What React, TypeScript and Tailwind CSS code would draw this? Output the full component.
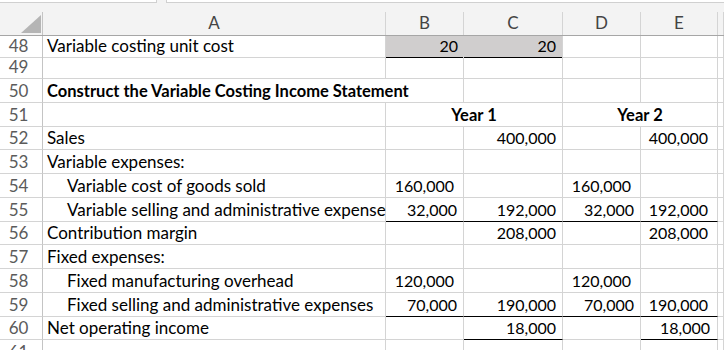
import clsx from "clsx";
import type { ReactNode } from "react";

const grid = "grid grid-cols-[43px_343px_78px_99px_78px_77px_1fr]";

function Cell({
  children,
  className = "",
  bb = false,
  nr = false,
}: {
  children?: ReactNode;
  className?: string;
  bb?: boolean;
  nr?: boolean;
}) {
  return (
    <div
      className={clsx(
        "flex items-end whitespace-nowrap border-r border-b pb-[1px] leading-[20px]",
        bb ? "border-b-black" : "border-b-[#d4d4d4]",
        nr ? "border-r-transparent" : "border-r-[#d4d4d4]",
        className
      )}
    >
      {children}
    </div>
  );
}

// label cell (column A), numbers keep the 16px size
function Label({ children, indent = false }: { children: ReactNode; indent?: boolean }) {
  return <Cell className={clsx("text-[17px]", indent ? "pl-[24px]" : "pl-[4px]")}>{children}</Cell>;
}

function Num({ n }: { n: number }) {
  return (
    <div className="flex items-end justify-center border-r border-b border-r-[#c4c4c4] border-b-[#d4d4d4] pb-[1px] pr-[5px] text-[17px] leading-[20px] text-[#5b5b5b]">
      {n}
    </div>
  );
}

function Row({ h, n, children }: { h: string; n: number; children?: ReactNode }) {
  return (
    <div className={clsx(grid, h)}>
      <Num n={n} />
      {children}
    </div>
  );
}

export default function App() {
  return (
    <div className="h-[350px] w-[724px] overflow-hidden bg-white font-['Lato',sans-serif] text-[16px] text-black">
      {/* formula bar edge */}
      <div className="flex h-[12px] bg-[#f3f3f3]">
        <div className="h-[3px] w-[157px] border-b border-r border-[#d0d0d0] bg-white" />
        <div className="ml-[9px] h-[3px] flex-1 border-b border-l border-[#d0d0d0] bg-white" />
      </div>

      {/* column headers */}
      <div className={clsx(grid, "h-[24px] border-b border-[#a6a6a6] bg-[#f3f3f3] text-[17px] text-[#444]")}>
        <div className="relative border-r border-[#c4c4c4]">
          <svg className="absolute left-[20px] top-[2px]" width="22" height="20" viewBox="0 0 22 20">
            <polygon points="21,1 21,19 1,19" fill="#b5b5b5" />
          </svg>
        </div>
        {["A", "B", "C", "D", "E", ""].map((l, i) => (
          <div key={i} className="flex items-end justify-center border-r border-[#d4d4d4] pb-[2px] leading-[20px]">
            {l}
          </div>
        ))}
      </div>

      <Row h="h-[19px]" n={48}>
        <Label>Variable costing unit cost</Label>
        <Cell bb nr className="justify-end bg-[#d0cece] pr-[5px]">20</Cell>
        <Cell bb className="justify-end bg-[#d0cece] pr-[6px]">20</Cell>
        <Cell />
        <Cell />
        <Cell />
      </Row>

      <Row h="h-[24px]" n={49}>
        <Cell />
        <Cell />
        <Cell />
        <Cell />
        <Cell />
        <Cell />
      </Row>

      <Row h="h-[24px]" n={50}>
        <Cell className="col-span-2 pl-[4px] text-[16.5px] font-bold">Construct the Variable Costing Income Statement</Cell>
        <Cell />
        <Cell />
        <Cell />
        <Cell />
      </Row>

      <Row h="h-[24px]" n={51}>
        <Cell />
        <Cell className="col-span-2 justify-center text-[16.5px] font-bold">Year 1</Cell>
        <Cell className="col-span-2 justify-center text-[16.5px] font-bold">Year 2</Cell>
        <Cell />
      </Row>

      <Row h="h-[23px]" n={52}>
        <Label>Sales</Label>
        <Cell />
        <Cell className="justify-end pr-[6px]">400,000</Cell>
        <Cell />
        <Cell className="justify-end pr-[9px]">400,000</Cell>
        <Cell />
      </Row>

      <Row h="h-[24px]" n={53}>
        <Label>Variable expenses:</Label>
        <Cell />
        <Cell />
        <Cell />
        <Cell />
        <Cell />
      </Row>

      <Row h="h-[24px]" n={54}>
        <Label indent>Variable cost of goods sold</Label>
        <Cell className="justify-end pr-[9px]">160,000</Cell>
        <Cell />
        <Cell className="justify-end pr-[9px]">160,000</Cell>
        <Cell />
        <Cell />
      </Row>

      <Row h="h-[24px]" n={55}>
        <Label indent>Variable selling and administrative expense</Label>
        <Cell bb className="justify-end pr-[6px]">32,000</Cell>
        <Cell bb className="justify-end pr-[6px]">192,000</Cell>
        <Cell bb className="justify-end pr-[6px]">32,000</Cell>
        <Cell bb className="justify-end pr-[9px]">192,000</Cell>
        <Cell />
      </Row>

      <Row h="h-[23px]" n={56}>
        <Label>Contribution margin</Label>
        <Cell />
        <Cell className="justify-end pr-[6px]">208,000</Cell>
        <Cell />
        <Cell className="justify-end pr-[9px]">208,000</Cell>
        <Cell />
      </Row>

      <Row h="h-[24px]" n={57}>
        <Label>Fixed expenses:</Label>
        <Cell />
        <Cell />
        <Cell />
        <Cell />
        <Cell />
      </Row>

      <Row h="h-[24px]" n={58}>
        <Label indent>Fixed manufacturing overhead</Label>
        <Cell className="justify-end pr-[9px]">120,000</Cell>
        <Cell />
        <Cell className="justify-end pr-[9px]">120,000</Cell>
        <Cell />
        <Cell />
      </Row>

      <Row h="h-[24px]" n={59}>
        <Label indent>Fixed selling and administrative expenses</Label>
        <Cell bb className="justify-end pr-[6px]">70,000</Cell>
        <Cell bb className="justify-end pr-[6px]">190,000</Cell>
        <Cell bb className="justify-end pr-[6px]">70,000</Cell>
        <Cell bb className="justify-end pr-[9px]">190,000</Cell>
        <Cell />
      </Row>

      <Row h="h-[23px]" n={60}>
        <Label>Net operating income</Label>
        <Cell />
        <Cell bb className="justify-end pr-[6px]">18,000</Cell>
        <Cell />
        <Cell bb className="justify-end pr-[7px]">18,000</Cell>
        <Cell />
      </Row>

      <Row h="h-[24px]" n={61}>
        <Cell />
        <Cell />
        <Cell />
        <Cell />
        <Cell />
        <Cell />
      </Row>
    </div>
  );
}
